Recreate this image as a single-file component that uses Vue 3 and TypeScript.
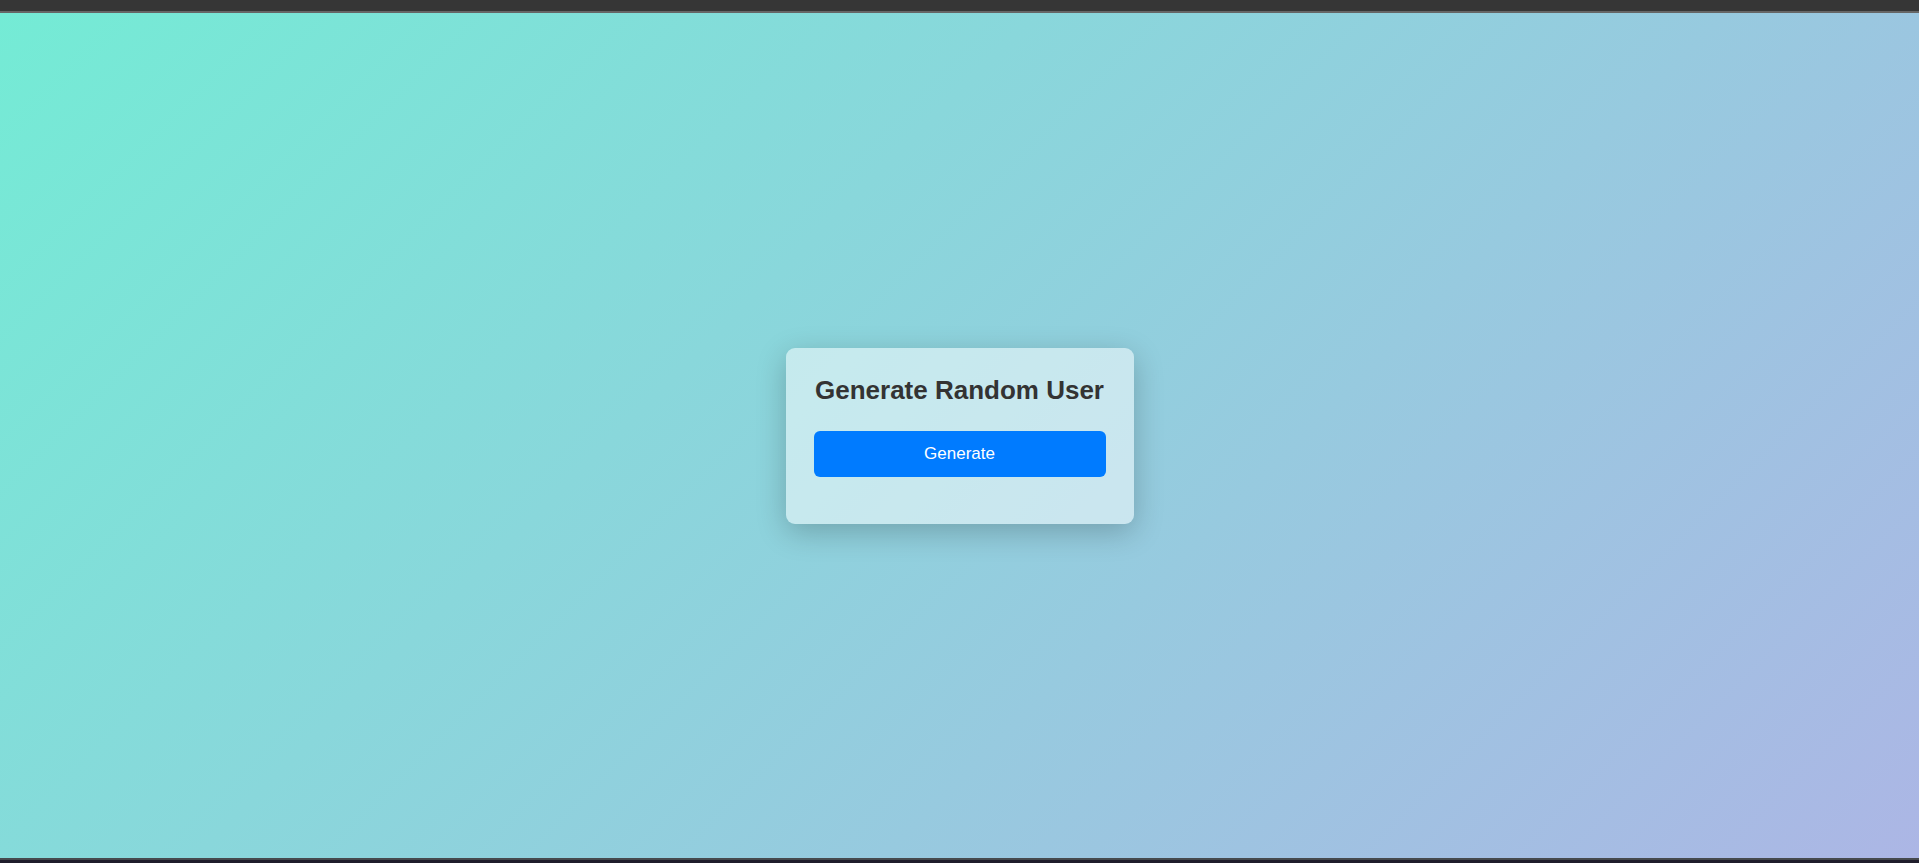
<script setup lang="ts">
import { ref } from 'vue'

const names: string[] = ['Emma Clarke', 'Liam Novak', 'Sofia Rossi', 'Noah Berg']
const user = ref<string>('')

function generate(): void {
  user.value = names[Math.floor(Math.random() * names.length)]
}
</script>

<template>
  <div class="page">
    <main class="stage">
      <section class="card" aria-labelledby="title">
        <h1 id="title" class="title">Generate Random User</h1>
        <button type="button" class="generate" @click="generate">Generate</button>
        <div class="result" aria-live="polite">{{ user }}</div>
      </section>
    </main>
  </div>
</template>

<style>
body {
  margin: 0;
}
</style>

<style scoped>
.page {
  box-sizing: border-box;
  min-height: 100vh;
  display: flex;
  flex-direction: column;
  border-top: 11px solid #363636;
  border-bottom: 3px solid #1f1d2b;
  font-family: Arial, "Liberation Sans", sans-serif;
}

.stage {
  flex: 1;
  display: flex;
  align-items: center;
  justify-content: center;
  border-top: 2px solid #666666;
  border-bottom: 2px solid #464a4e;
  background: linear-gradient(135deg, #74ebd5, #acb6e5) padding-box;
}

.card {
  box-sizing: border-box;
  min-width: 348px;
  padding: 28px;
  display: flex;
  flex-direction: column;
  border-radius: 9px;
  background: rgba(255, 255, 255, 0.5);
  box-shadow: 0 8px 30px rgba(0, 0, 0, 0.22);
}

.title {
  margin: 0 0 26px;
  font-size: 26px;
  line-height: 29px;
  font-weight: 700;
  text-align: center;
  white-space: nowrap;
  color: #333333;
}

.generate {
  padding: 13px;
  border: 0;
  border-radius: 6px;
  background: #007bff;
  color: #ffffff;
  font-family: inherit;
  font-size: 17px;
  line-height: 20px;
  cursor: pointer;
}

.generate:hover {
  background: #0069d9;
}

.result {
  margin-top: 19px;
  text-align: center;
  color: #333333;
}
</style>
